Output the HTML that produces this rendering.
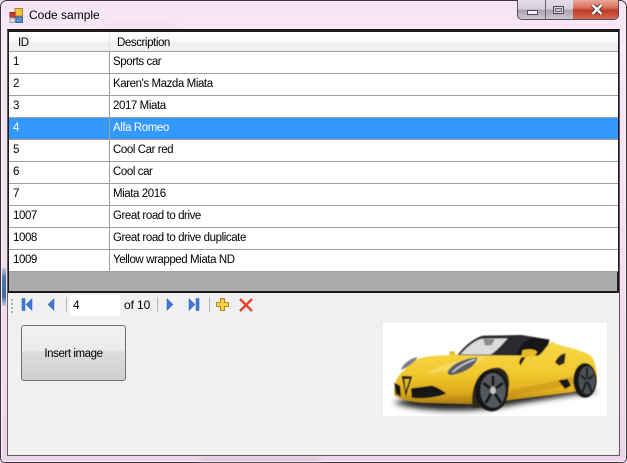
<!DOCTYPE html>
<html><head><meta charset="utf-8">
<style>
html,body{margin:0;padding:0;width:627px;height:463px;overflow:hidden;background:#efd9ee;}
*{box-sizing:border-box}
body{position:relative;font-family:"Liberation Sans",sans-serif;font-size:11.5px;color:#000;}
.a{position:absolute}
.t{position:absolute;white-space:nowrap;line-height:14px;font-size:11.5px;letter-spacing:-.42px}
.h{position:absolute;left:9px;width:609px;height:1px;background:#a0a0a0}
</style></head><body>
<div class="a" style="left:0;top:0;width:627px;height:463px;background:linear-gradient(180deg,#f5e3f3 0,#f8e9f7 28px,#ecd6ea 100%);border:1px solid #3a3238;border-radius:7px 7px 5px 5px"></div>
<div class="a" style="left:1px;top:1px;width:625px;height:461px;border:1px solid #f9f0f8;border-radius:6px 6px 4px 4px"></div>
<div class="a" style="left:100px;top:21px;width:80px;height:7px;background:#e6d4e4;filter:blur(4px);opacity:.4"></div>
<div class="a" style="left:2px;top:268px;width:4px;height:38px;background:linear-gradient(180deg,#cfc6de,#4d78aa 25%,#3f6a9c 75%,#d9c6dc)"></div>
<div class="a" style="left:200px;top:457px;width:120px;height:4px;background:#dfc4db;filter:blur(2px)"></div>

<!-- titlebar icon -->
<svg class="a" style="left:9px;top:8px" width="15" height="15" viewBox="0 0 15 15">
<rect x="6" y="0.5" width="7.5" height="7.5" fill="#f2c53d" stroke="#a8842c"/>
<rect x="1" y="4.5" width="5" height="5" fill="#d8392c" stroke="#8e2a22"/>
<rect x="1" y="10" width="5" height="4.5" fill="#d9dfe8" stroke="#98a2b0"/>
<rect x="7" y="9" width="6.5" height="5.5" fill="#5c8fd2" stroke="#3a659e"/>
</svg>
<div class="t" style="left:29px;top:8px;font-size:12px;letter-spacing:0">Code sample</div>

<!-- window buttons -->
<div class="a" style="left:517px;top:0;width:102px;height:20px;border:1px solid #5a4c58;border-top:none;border-radius:0 0 5px 5px;overflow:hidden;background:linear-gradient(180deg,#e4dce6 0,#d8d0da 45%,#aaa0ae 55%,#cfc8d2 100%)">
<div class="a" style="left:27px;top:0;width:1px;height:19px;background:#6e6470"></div>
<div class="a" style="left:55px;top:0;width:1px;height:19px;background:#6e6470"></div>
<div class="a" style="left:55px;top:0;width:47px;height:19px;background:linear-gradient(180deg,#e8a89a 0,#d9705c 40%,#be3a22 55%,#d56a50 100%)"></div>
<div class="a" style="left:9px;top:10px;width:11px;height:5px;background:#f4f4f8;border:1px solid #4c4858"></div>
<div class="a" style="left:35px;top:6px;width:11px;height:8px;border:1px solid #4c4858;background:#dcd8e2"><div class="a" style="left:1px;top:1px;width:7px;height:4px;border:1px solid #6a6474;background:#c8c4d0"></div></div>
<svg class="a" style="left:73px;top:4px" width="12" height="11" viewBox="0 0 12 11"><path d="M1.5 1L10.5 10M10.5 1L1.5 10" stroke="#4a2a2a" stroke-width="4.2"/><path d="M1.5 1L10.5 10M10.5 1L1.5 10" stroke="#fff" stroke-width="2.6"/></svg>
</div>

<!-- client area -->
<div class="a" style="left:7px;top:29px;width:613px;height:427px;background:#f0f0f0;border:1px solid #625c62;border-top:2px solid #1d1a1e"></div>

<!-- grid -->
<div class="a" style="left:8px;top:30px;width:611px;height:263px;border:2px solid #1a1a1a;border-left-width:1px;background:#ababab"></div>
<div class="a" style="left:9px;top:32px;width:609px;height:19px;background:linear-gradient(180deg,#fff 0,#fafafa 50%,#eff0f1 55%,#eef0f2 100%)"></div>
<div class="a" style="left:9px;top:51px;width:609px;height:220px;background:#fff"></div>
<div class="a" style="left:9px;top:117px;width:609px;height:22px;background:#3399ff"></div>
<div class="h" style="top:51px"></div><div class="h" style="top:73px"></div><div class="h" style="top:95px"></div><div class="h" style="top:117px"></div><div class="h" style="top:139px"></div><div class="h" style="top:161px"></div><div class="h" style="top:183px"></div><div class="h" style="top:205px"></div><div class="h" style="top:227px"></div><div class="h" style="top:249px"></div><div class="h" style="top:271px"></div>
<div class="a" style="left:109px;top:51px;width:1px;height:221px;background:#a0a0a0"></div>
<div class="a" style="left:109px;top:33px;width:1px;height:18px;background:#e2e4e6"></div>

<div class="t" style="left:18px;top:36px">ID</div>
<div class="t" style="left:117px;top:36px">Description</div>

<div class="t" style="left:13px;top:55px">1</div><div class="t" style="left:113px;top:55px">Sports car</div>
<div class="t" style="left:13px;top:77px">2</div><div class="t" style="left:113px;top:77px">Karen's Mazda Miata</div>
<div class="t" style="left:13px;top:99px">3</div><div class="t" style="left:113px;top:99px">2017 Miata</div>
<div class="t" style="left:13px;top:121px;color:#fff">4</div><div class="t" style="left:113px;top:121px;color:#fff">Alfa Romeo</div>
<div class="t" style="left:13px;top:143px">5</div><div class="t" style="left:113px;top:143px">Cool Car red</div>
<div class="t" style="left:13px;top:165px">6</div><div class="t" style="left:113px;top:165px">Cool car</div>
<div class="t" style="left:13px;top:187px">7</div><div class="t" style="left:113px;top:187px">Miata 2016</div>
<div class="t" style="left:13px;top:209px">1007</div><div class="t" style="left:113px;top:209px">Great road to drive</div>
<div class="t" style="left:13px;top:231px">1008</div><div class="t" style="left:113px;top:231px">Great road to drive duplicate</div>
<div class="t" style="left:13px;top:253px">1009</div><div class="t" style="left:113px;top:253px">Yellow wrapped Miata ND</div>

<!-- toolbar -->
<svg class="a" style="left:9px;top:293px" width="250" height="26" viewBox="0 0 250 26">
<g fill="#b4b4b4"><rect x="2" y="6" width="2" height="2"/><rect x="2" y="10" width="2" height="2"/><rect x="2" y="14" width="2" height="2"/><rect x="2" y="18" width="2" height="2"/></g>
<g fill="#3f78d8" stroke="#2f62b8" stroke-width=".5">
<rect x="13" y="5.5" width="3" height="12"/><path d="M23 5.5V17.5L17 11.5Z"/>
<path d="M45 5.5V17.5L39 11.5Z"/>
<path d="M158 5.5V17.5L164 11.5Z"/>
<path d="M180 5.5V17.5L186 11.5Z"/><rect x="187" y="5.5" width="3" height="12"/>
</g>
<g fill="#b8b8b8"><rect x="57" y="4" width="1" height="15"/><rect x="148" y="4" width="1" height="15"/><rect x="200" y="4" width="1" height="15"/></g>
<path d="M212 6h4v4h4v4h-4v4h-4v-4h-4v-4h4z" transform="translate(-.5,-.5)" fill="#f6cf4a" stroke="#b78a1e"/>
<path d="M231 6L243 18M243 6L231 18" stroke="#e8412c" stroke-width="2.4" fill="none"/>
</svg>
<div class="a" style="left:70px;top:295px;width:50px;height:21px;background:#fff"></div>
<div class="t" style="left:73px;top:298px;font-size:12px;letter-spacing:0">4</div>
<div class="t" style="left:124px;top:298px;font-size:12px;letter-spacing:-.1px">of 10</div>

<!-- button -->
<div class="a" style="left:21px;top:325px;width:105px;height:56px;border:1px solid #707070;border-radius:3px;background:linear-gradient(180deg,#f1f1f1 0,#ebebeb 46%,#dddddd 47%,#cfcfcf 100%)"></div>
<div class="t" style="left:21px;top:347px;width:105px;text-align:center">Insert image</div>

<!-- car -->
<div class="a" style="left:383px;top:323px;width:224px;height:93px;background:#fff"></div>
<svg class="a" style="left:375px;top:315px" width="240" height="108" viewBox="0 0 720 324">
<defs>
<linearGradient id="b" x1="0" y1="0" x2="0" y2="1"><stop offset="0" stop-color="#f7d848"/><stop offset=".5" stop-color="#f2c92f"/><stop offset=".8" stop-color="#e0ac1e"/><stop offset="1" stop-color="#a87a14"/></linearGradient>
<filter id="f" x="-20%" y="-60%" width="140%" height="220%"><feGaussianBlur stdDeviation="9"/></filter>
<filter id="g"><feGaussianBlur stdDeviation="1.4"/></filter>
</defs>
<clipPath id="c"><rect x="24" y="24" width="672" height="279"/></clipPath>
<g clip-path="url(#c)">
<path d="M55 262C120 290 300 296 420 268L590 240L670 232L600 215L200 225Z" fill="#222" filter="url(#f)"/>
<g filter="url(#g)">
<path d="M58 240C54 210 66 180 92 162C108 135 140 124 190 122L250 119L350 121L490 122C505 105 520 90 530 80C565 100 620 100 650 125C665 150 668 180 664 210L590 232L400 256L300 268L150 264C110 262 75 254 58 240Z" fill="url(#b)"/>
<path d="M150 178C190 150 250 132 330 125L300 150C250 160 190 170 150 178Z" fill="#f5dc6e" opacity=".75"/>
<path d="M260 245C350 235 480 215 590 185L600 205L400 246Z" fill="#c4921a" opacity=".55"/>
<path d="M248 120C270 90 300 68 325 62L440 60L524 74L520 90L490 122L350 121Z" fill="#2c2c2e"/>
<path d="M256 118C280 92 300 76 322 71L398 70C380 90 365 108 346 119Z" fill="#dcdcdc"/>
<path d="M325 72L360 72L350 90L330 92Z" fill="#8b8b8b"/>
<path d="M425 120C432 92 455 70 480 68L522 76C518 92 505 112 490 122Z" fill="#161616"/>
<path d="M442 107C450 101 480 101 486 110C486 122 470 126 452 126L436 152L432 142L438 128Z" fill="#e8b925"/>
<path d="M438 128L452 126L436 152L432 142Z" fill="#1e1e1e"/>
<path d="M540 142C548 125 560 115 572 115L568 145L552 152Z" fill="#26221a"/>
<path d="M218 172C225 150 265 130 306 127C308 145 280 170 232 180C222 180 218 178 218 172Z" fill="#595d66"/>
<path d="M232 172C255 150 280 140 300 133" stroke="#c9ccd2" stroke-width="5" fill="none"/>
<path d="M78 165C82 148 105 130 128 126C118 145 95 158 78 165Z" fill="#7c8086"/>
<path d="M58 203L76 213L78 245L62 236Z" fill="#141414"/>
<path d="M80 183L112 184L92 245Z" fill="#151515"/>
<path d="M88 192L104 192L92 228Z" fill="#e6b428"/>
<path d="M108 220L170 212C190 218 205 228 214 236C180 250 130 252 110 248Z" fill="#141414"/>
<path d="M550 196L578 192L588 212L570 222Z" fill="#171717"/>
<path d="M292 278C285 200 320 158 368 158C395 160 408 190 400 225L380 275Z" fill="#2e2a1c"/>
<ellipse cx="350" cy="226" rx="50" ry="63" fill="#171717"/>
<ellipse cx="354" cy="226" rx="38" ry="52" fill="#55585c"/>
<ellipse cx="354" cy="226" rx="8" ry="11" fill="#c8c8c8"/>
<g stroke="#191919" stroke-width="9" fill="none"><path d="M354 183V212M325 204L345 220M332 264L348 236M378 264L360 236M384 204L362 220"/></g>
<ellipse cx="630" cy="196" rx="35" ry="52" fill="#161616"/>
<ellipse cx="636" cy="196" rx="25" ry="42" fill="#4e5155"/>
<g stroke="#191919" stroke-width="6" fill="none"><path d="M636 158V190M617 180L632 194M622 232L634 200M650 232L638 200M656 180L640 194"/></g>
<path d="M224 110L238 108L241 120L224 120Z" fill="#e6b92c"/>
</g>
</g>
</svg>
</body></html>
